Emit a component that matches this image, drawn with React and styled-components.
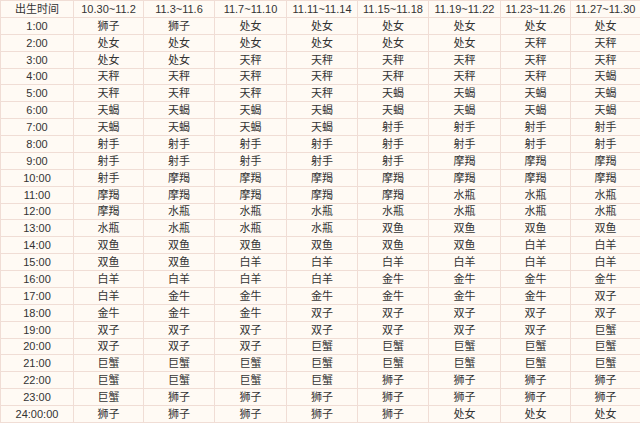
import React from "react";
import styled, { createGlobalStyle } from "styled-components";

const Global = createGlobalStyle`
  html, body { margin: 0; padding: 0; background: #ffffff; }
  body { font-family: "Liberation Sans", "Noto Sans CJK SC", Arial, sans-serif; }
`;

const Table = styled.table`
  width: 640px;
  table-layout: fixed;
  border-collapse: collapse;
  background: #fffaf4;
  color: #333333;
  font-size: 11px;
  font-family: "Liberation Sans", "Noto Sans CJK SC", Arial, sans-serif;
`;

const Row = styled.tr`
  height: 16.88px;
`;

const HeadCell = styled.th`
  font-weight: normal;
  text-align: center;
  padding: 0;
  border: 1px solid #f0ddd5;
  line-height: 14px;
  white-space: nowrap;
`;

const Cell = styled.td`
  text-align: center;
  padding: 0;
  border: 1px solid #f0ddd5;
  line-height: 14px;
  white-space: nowrap;
`;

const widths = [73, 70, 71, 72, 71, 71, 72, 70, 70];
const headers = [
  "出生时间",
  "10.30~11.2",
  "11.3~11.6",
  "11.7~11.10",
  "11.11~11.14",
  "11.15~11.18",
  "11.19~11.22",
  "11.23~11.26",
  "11.27~11.30",
];

const rows = [
  ["1:00", "狮子 狮子 处女 处女 处女 处女 处女 处女"],
  ["2:00", "处女 处女 处女 处女 处女 处女 天秤 天秤"],
  ["3:00", "处女 处女 天秤 天秤 天秤 天秤 天秤 天秤"],
  ["4:00", "天秤 天秤 天秤 天秤 天秤 天秤 天秤 天蝎"],
  ["5:00", "天秤 天秤 天秤 天秤 天蝎 天蝎 天蝎 天蝎"],
  ["6:00", "天蝎 天蝎 天蝎 天蝎 天蝎 天蝎 天蝎 天蝎"],
  ["7:00", "天蝎 天蝎 天蝎 天蝎 射手 射手 射手 射手"],
  ["8:00", "射手 射手 射手 射手 射手 射手 射手 射手"],
  ["9:00", "射手 射手 射手 射手 射手 摩羯 摩羯 摩羯"],
  ["10:00", "射手 摩羯 摩羯 摩羯 摩羯 摩羯 摩羯 摩羯"],
  ["11:00", "摩羯 摩羯 摩羯 摩羯 摩羯 水瓶 水瓶 水瓶"],
  ["12:00", "摩羯 水瓶 水瓶 水瓶 水瓶 水瓶 水瓶 水瓶"],
  ["13:00", "水瓶 水瓶 水瓶 水瓶 双鱼 双鱼 双鱼 双鱼"],
  ["14:00", "双鱼 双鱼 双鱼 双鱼 双鱼 双鱼 白羊 白羊"],
  ["15:00", "双鱼 双鱼 白羊 白羊 白羊 白羊 白羊 白羊"],
  ["16:00", "白羊 白羊 白羊 白羊 金牛 金牛 金牛 金牛"],
  ["17:00", "白羊 金牛 金牛 金牛 金牛 金牛 金牛 双子"],
  ["18:00", "金牛 金牛 金牛 双子 双子 双子 双子 双子"],
  ["19:00", "双子 双子 双子 双子 双子 双子 双子 巨蟹"],
  ["20:00", "双子 双子 双子 巨蟹 巨蟹 巨蟹 巨蟹 巨蟹"],
  ["21:00", "巨蟹 巨蟹 巨蟹 巨蟹 巨蟹 巨蟹 巨蟹 巨蟹"],
  ["22:00", "巨蟹 巨蟹 巨蟹 巨蟹 狮子 狮子 狮子 狮子"],
  ["23:00", "巨蟹 狮子 狮子 狮子 狮子 狮子 狮子 狮子"],
  ["24:00:00", "狮子 狮子 狮子 狮子 狮子 处女 处女 处女"],
];

export default function App() {
  return (
    <>
      <Global />
      <Table>
        <colgroup>
          {widths.map((w, i) => (
            <col key={i} style={{ width: w }} />
          ))}
        </colgroup>
        <thead>
          <Row>
            {headers.map((h) => (
              <HeadCell key={h}>{h}</HeadCell>
            ))}
          </Row>
        </thead>
        <tbody>
          {rows.map(([time, signs]) => (
            <Row key={time}>
              <Cell>{time}</Cell>
              {signs.split(" ").map((s, i) => (
                <Cell key={i}>{s}</Cell>
              ))}
            </Row>
          ))}
        </tbody>
      </Table>
    </>
  );
}
